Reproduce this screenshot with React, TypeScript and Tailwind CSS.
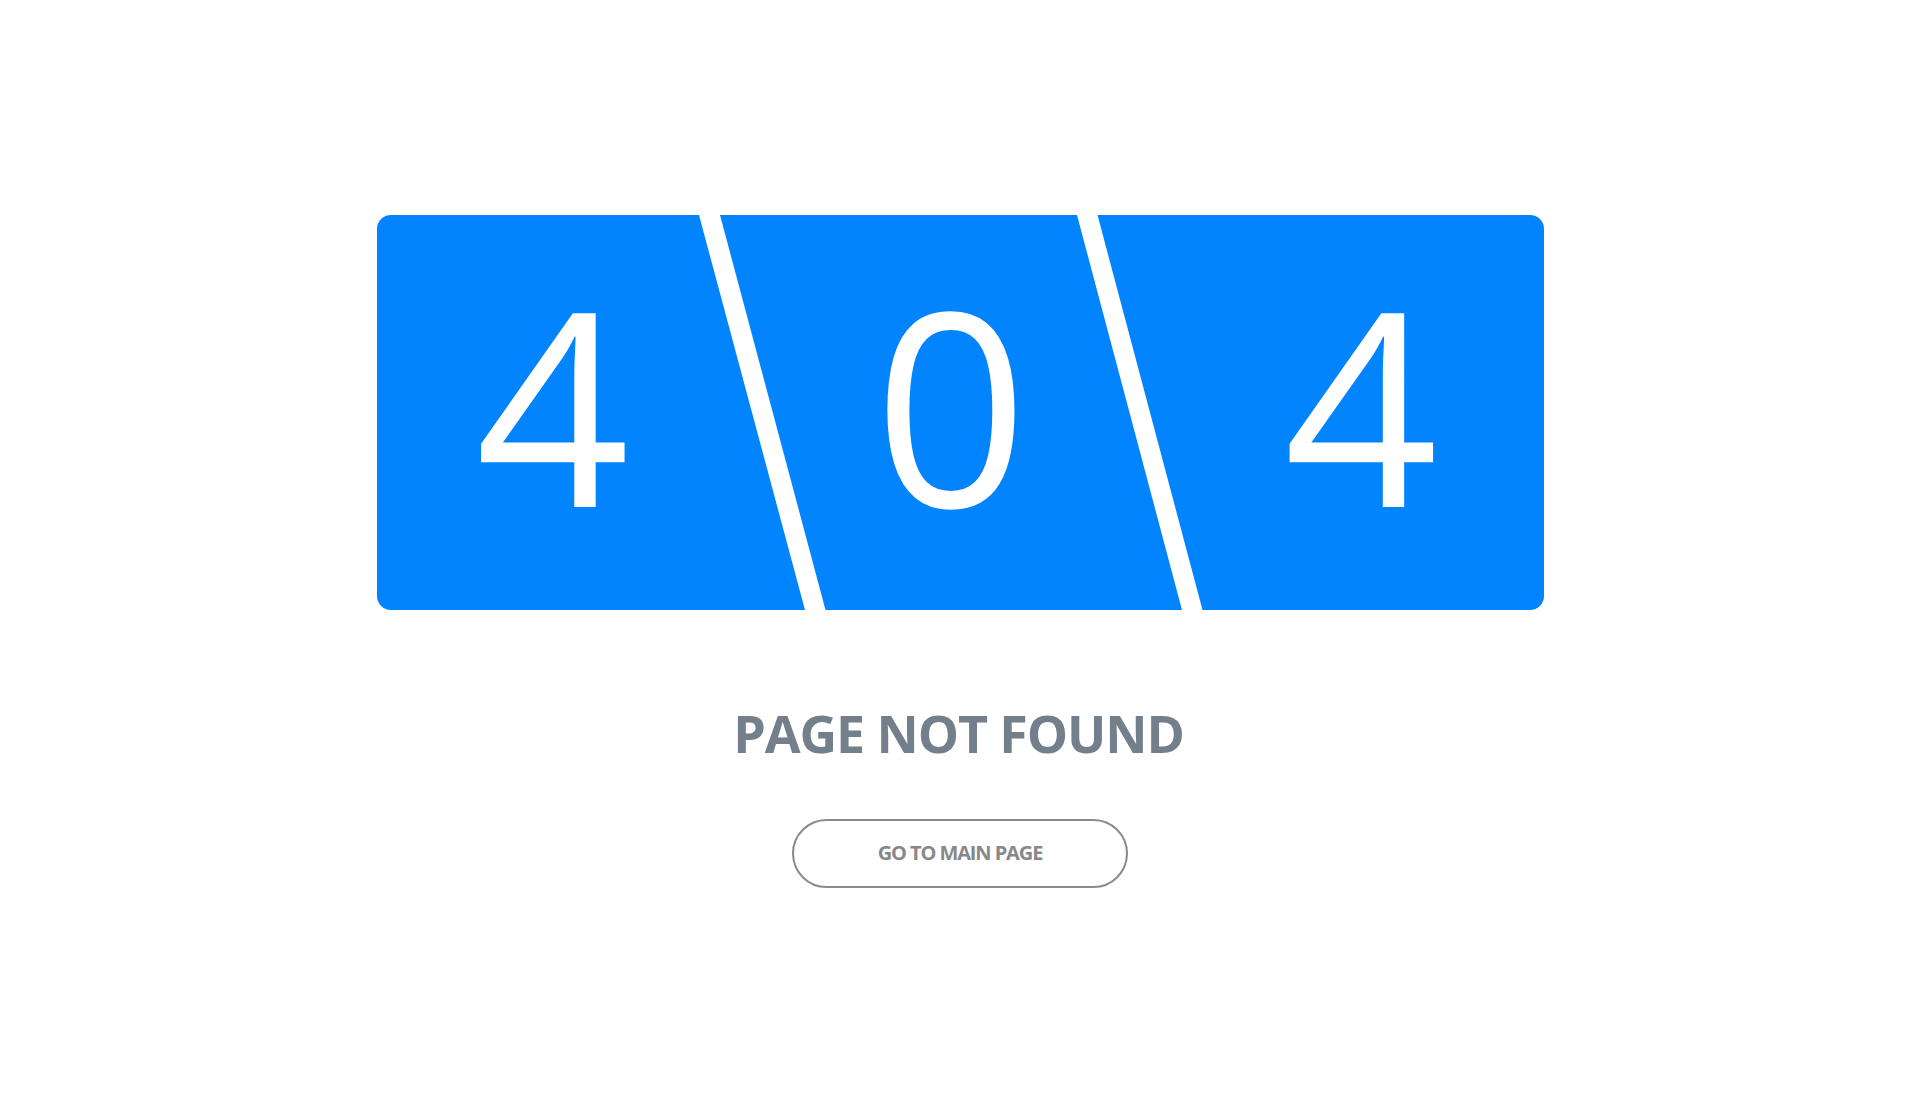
import React from "react";

export default function App() {
  return (
    <div
      className="flex min-h-screen w-full flex-col items-center justify-center bg-white"
      style={{ fontFamily: '"Open Sans", "Noto Sans", sans-serif' }}
    >
      <div className="relative h-[395px] w-[1167px] overflow-hidden rounded-[14px] bg-[#0384ff]">
        <div className="flex h-full items-center pb-[20px] text-white">
          <div className="flex w-[352px] justify-center text-[270px] font-normal leading-none">4</div>
          <div className="flex w-[445px] justify-center text-[270px] font-normal leading-none">0</div>
          <div className="flex w-[370px] justify-center pl-[5px] text-[270px] font-normal leading-none">4</div>
        </div>
        <svg
          className="pointer-events-none absolute inset-0"
          width="1167"
          height="395"
          viewBox="0 0 1167 395"
        >
          <polygon points="322,0 343,0 448.5,395 428,395" fill="#ffffff" />
          <polygon points="700,0 720.5,0 825.5,395 805,395" fill="#ffffff" />
        </svg>
      </div>
      <h1 className="mt-[97px] pr-[3px] text-[52px] font-bold leading-none tracking-[-1.1px] text-[#737f8b]">
        PAGE NOT FOUND
      </h1>
      <button className="mt-[60px] flex h-[69px] w-[336px] items-center justify-center rounded-full border-2 border-[#8a8a8a] bg-white text-[20px] font-bold tracking-[-1.1px] text-[#888888]">
        GO TO MAIN PAGE
      </button>
    </div>
  );
}
